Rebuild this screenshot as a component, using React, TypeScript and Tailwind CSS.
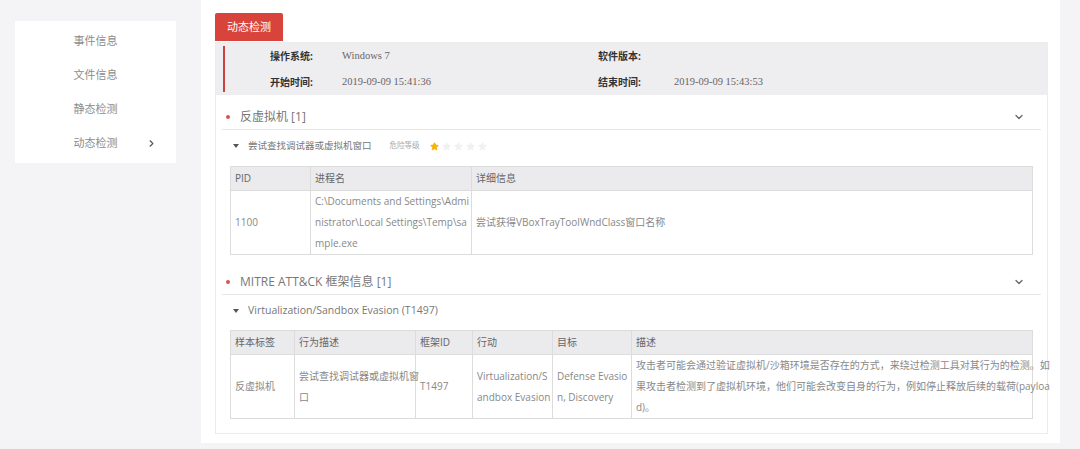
import React from 'react';
import { ChevronDown, ChevronRight, Star } from 'lucide-react';

const sideItems = ['事件信息', '文件信息', '静态检测', '动态检测'];

const SectionHeader: React.FC<{ title: string; className?: string }> = ({ title, className = '' }) => (
  <div className={`h-[26px] flex items-center border-b border-[#e6e6e6] pl-[4px] pr-[16px] ${className}`}>
    <span className="w-[4px] h-[4px] rounded-full bg-[#d9534f]" />
    <span className="ml-[10px] text-[12px] text-[#777] flex-1">{title}</span>
    <ChevronDown size={12} strokeWidth={2.5} className="text-[#666]" />
  </div>
);

const SubRow: React.FC<{ children: React.ReactNode }> = ({ children }) => (
  <div className="h-[32px] flex items-center pl-[11px]">
    <span className="w-0 h-0 border-l-[3px] border-r-[3px] border-t-[4px] border-l-transparent border-r-transparent border-t-[#555]" />
    <div className="ml-[9px] flex items-center">{children}</div>
  </div>
);

const th = 'h-[24px] border border-[#dcdcdc] px-[4px] text-left font-normal text-[10px] text-[#666]';
const td = 'border border-[#dcdcdc] px-[4px] align-middle text-[10px] leading-[21px] text-[#888] whitespace-nowrap';

export default function App() {
  return (
    <div className="w-[1080px] h-[449px] bg-[#f4f4f7] flex items-start font-['Open_Sans','Noto_Sans_CJK_SC',sans-serif] overflow-hidden">
      {/* Sidebar */}
      <div className="w-[161px] mt-[21px] ml-[15px] bg-white py-[3px]">
        {sideItems.map((item, i) => (
          <div key={item} className="h-[34px] grid grid-cols-[1fr_auto_1fr] items-center text-[11px] text-[#8c8c8c]">
            <span />
            <span>{item}</span>
            <span className="flex justify-end pr-[19px]">
              {i === 3 && <ChevronRight size={11} strokeWidth={2.5} className="text-[#555]" />}
            </span>
          </div>
        ))}
      </div>

      {/* Main panel */}
      <div className="ml-[25px] w-[859px] h-[443px] bg-white pt-[13px] pl-[14px] pr-[12px]">
        <div className="w-[68px] h-[28px] bg-[#d8433c] rounded-t-[2px] flex items-center justify-center text-[11px] text-white">
          动态检测
        </div>

        <div className="mt-[1px] border border-[#ececec] pb-[14px]">
          {/* Info box */}
          <div className="h-[52px] bg-[#eeedf0] flex">
            <div className="ml-[7px] my-[3px] w-[2px] bg-[#c9413c]" />
            <div className="pl-[45px] grid grid-cols-[72px_256px_76px_1fr] grid-rows-[26px_26px] items-center text-[10px] text-[#666]">
              <span className="font-bold text-[#333]">操作系统:</span>
              <span className="font-['Liberation_Serif',serif] text-[10.5px]">Windows 7</span>
              <span className="font-bold text-[#333]">软件版本:</span>
              <span />
              <span className="font-bold text-[#333]">开始时间:</span>
              <span className="font-['Liberation_Serif',serif] text-[10.5px]">2019-09-09 15:41:36</span>
              <span className="font-bold text-[#333]">结束时间:</span>
              <span className="font-['Liberation_Serif',serif] text-[10.5px]">2019-09-09 15:43:53</span>
            </div>
          </div>

          <div className="mx-[6px]">
            <SectionHeader title="反虚拟机 [1]" className="mt-[9px]" />
            <SubRow>
              <span className="text-[9.5px] text-[#777]">尝试查找调试器或虚拟机窗口</span>
              <span className="ml-[18px] text-[7.5px] text-[#aaa]">危险等级</span>
              <span className="ml-[10px] flex items-center gap-[3px]">
                <Star size={9} fill="#f5b400" stroke="#f5b400" />
                {[0, 1, 2, 3].map((s) => (
                  <Star key={s} size={9} fill="#f1f1f1" stroke="#f1f1f1" />
                ))}
              </span>
            </SubRow>

            <div className="mx-[8px] mt-[4px]">
              <table className="w-full table-fixed border-collapse">
                <colgroup>
                  <col className="w-[80px]" />
                  <col className="w-[161px]" />
                  <col />
                </colgroup>
                <thead>
                  <tr className="bg-[#ebeaed]">
                    <th className={`${th} font-bold`}>PID</th>
                    <th className={th}>进程名</th>
                    <th className={th}>详细信息</th>
                  </tr>
                </thead>
                <tbody>
                  <tr className="h-[62px]">
                    <td className={td}>1100</td>
                    <td className={td}>
                      C:\Documents and Settings\Admi
                      <br />
                      nistrator\Local Settings\Temp\sa
                      <br />
                      mple.exe
                    </td>
                    <td className={`${td} text-[9.5px]`}>
                      尝试获得<span className="text-[10px]">VBoxTrayToolWndClass</span>窗口名称
                    </td>
                  </tr>
                </tbody>
              </table>
            </div>

            <SectionHeader title="MITRE ATT&CK 框架信息 [1]" className="mt-[14px]" />
            <SubRow>
              <span className="text-[10.5px] text-[#777]">Virtualization/Sandbox Evasion (T1497)</span>
            </SubRow>

            <div className="mx-[8px] mt-[3px]">
              <table className="w-full table-fixed border-collapse">
                <colgroup>
                  <col className="w-[64px]" />
                  <col className="w-[121px]" />
                  <col className="w-[57px]" />
                  <col className="w-[80px]" />
                  <col className="w-[79px]" />
                  <col />
                </colgroup>
                <thead>
                  <tr className="bg-[#ebeaed]">
                    <th className={th}>样本标签</th>
                    <th className={th}>行为描述</th>
                    <th className={th}>框架ID</th>
                    <th className={th}>行动</th>
                    <th className={th}>目标</th>
                    <th className={th}>描述</th>
                  </tr>
                </thead>
                <tbody>
                  <tr className="h-[62px]">
                    <td className={`${td} text-[9.5px]`}>反虚拟机</td>
                    <td className={`${td} text-[9.3px] px-[3px]`}>
                      尝试查找调试器或虚拟机窗
                      <br />口
                    </td>
                    <td className={td}>T1497</td>
                    <td className={`${td} px-[3px]`}>
                      Virtualization/S
                      <br />
                      andbox Evasion
                    </td>
                    <td className={`${td} px-[3px]`}>
                      Defense Evasio
                      <br />
                      n, Discovery
                    </td>
                    <td className={`${td} text-[9.4px] px-[3px]`}>
                      攻击者可能会通过验证虚拟机/沙箱环境是否存在的方式，来绕过检测工具对其行为的检测。如
                      <br />
                      果攻击者检测到了虚拟机环境，他们可能会改变自身的行为，例如停止释放后续的载荷(payloa
                      <br />
                      d)。
                    </td>
                  </tr>
                </tbody>
              </table>
            </div>
          </div>
        </div>
      </div>
    </div>
  );
}
